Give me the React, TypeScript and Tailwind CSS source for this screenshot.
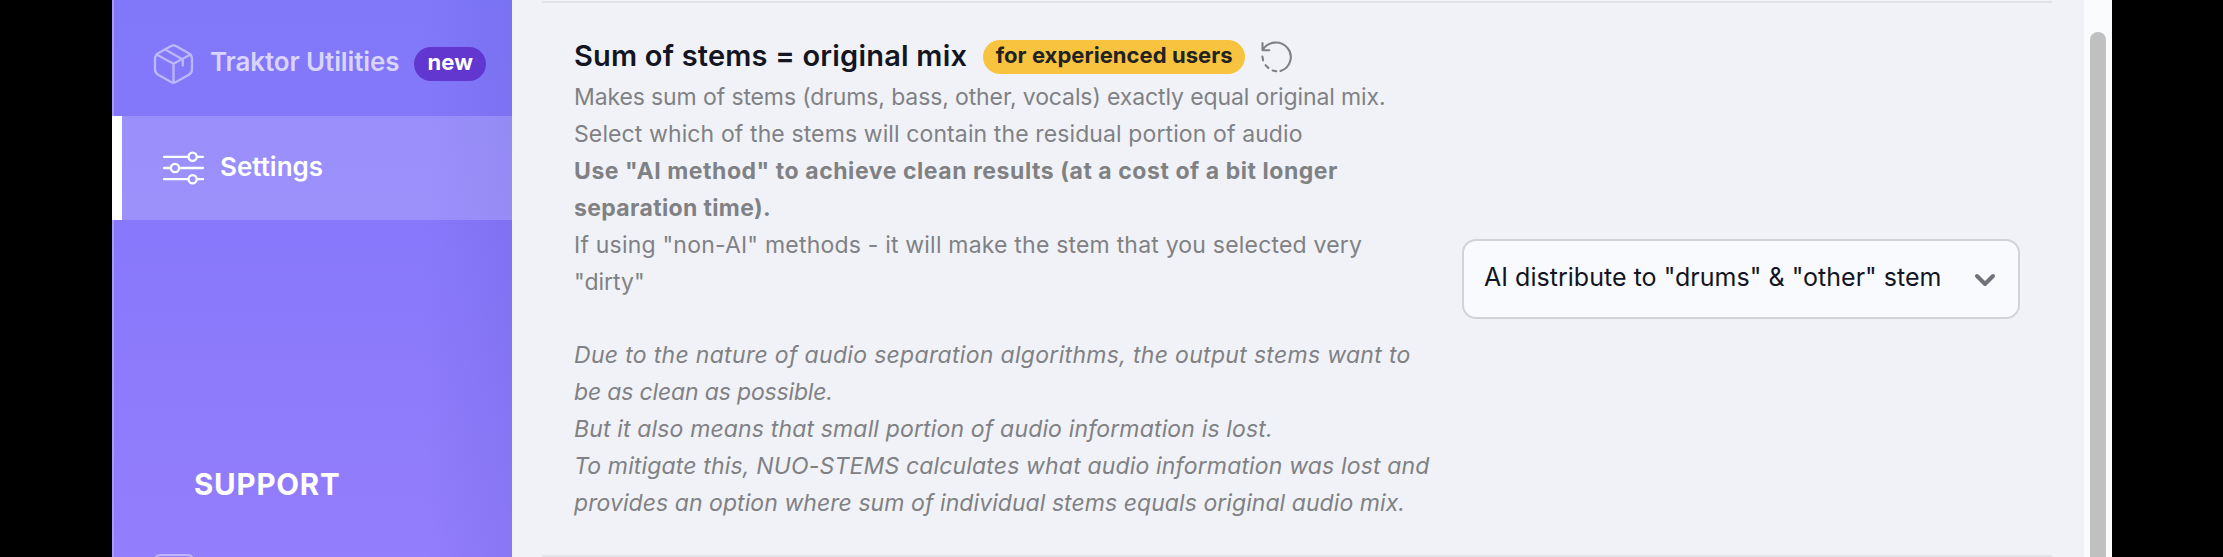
import React from "react";

function BoxIcon() {
  return (
    <svg className="h-[42px] w-[42px] shrink-0" viewBox="0 0 42 42" fill="none" stroke="#bdb7fc" strokeWidth="2.3" strokeLinejoin="round" strokeLinecap="round">
      <path d="M17.6 3.2Q20.5 1.5 23.4 3.2L35.4 9.9Q39 12 39 15.6V26.4Q39 30 35.4 32.1L23.4 38.8Q20.5 40.5 17.6 38.8L5.6 32.1Q2 30 2 26.4V15.6Q2 12 5.6 9.9Z" />
      <path d="M3.5 11.5L20.5 20.8L37.5 11.5M20.5 20.8V39.5" />
      <path d="M12.2 6.6L29.8 16.4V22.5" />
    </svg>
  );
}

function SlidersIcon() {
  return (
    <svg className="h-[34px] w-[42px] shrink-0" viewBox="0 0 42 34" fill="none" stroke="#ffffff" strokeWidth="2.3" strokeLinecap="round">
      <path d="M1 5.8H25.2M34 5.8H40M1 17H7.6M16.4 17H40M1 28.2H25.2M34 28.2H40" />
      <circle cx="29.6" cy="5.8" r="4.1" />
      <circle cx="12" cy="17" r="4.1" />
      <circle cx="29.6" cy="28.2" r="4.1" />
    </svg>
  );
}

function ResetIcon() {
  return (
    <svg className="h-[34px] w-[34px] shrink-0" viewBox="0 0 34 34" fill="none" stroke="#808184" strokeWidth="2.1" strokeLinecap="round" strokeLinejoin="round">
      <path d="M2.5 3V10.2H9.3M2.8 9.8A15 14.6 0 1 1 20.5 31" />
      <path d="M2.4 16.5L3.1 20.4M5.6 25.2L8.4 28M12.6 30.5L16.3 31.3" />
    </svg>
  );
}

export default function App() {
  return (
    <div className="flex h-[557px] w-[2223px] overflow-hidden bg-black pl-[112px] pr-[111px] font-['Inter',sans-serif]">
      <aside className="flex w-[400px] shrink-0 flex-col bg-[linear-gradient(90deg,transparent_78%,rgba(70,70,190,0.13)_100%),linear-gradient(180deg,#8078f9_0%,#8878fb_40%,#937efc_100%)]">
        <div className="flex h-[116px] shrink-0 items-start border-l-2 border-[#a69bfb] pl-[39px] pt-[43px]">
          <BoxIcon />
          <span className="ml-[15px] whitespace-nowrap text-[26px] font-semibold leading-[38px] tracking-[-0.13px] text-[#d9d5fe]">Traktor Utilities</span>
          <span className="ml-[15px] mt-1 flex h-[34px] w-[72px] shrink-0 items-center justify-center rounded-full bg-[#6137cf] pb-[3px] text-[22px] font-bold tracking-[0.2px] text-white">new</span>
        </div>
        <div className="flex h-[104px] shrink-0 items-center border-l-[10px] border-white bg-white/18 pl-[41px]">
          <SlidersIcon />
          <span className="ml-[15px] pb-[3px] text-[26px] font-semibold leading-[40px] text-white">Settings</span>
        </div>
        <div className="flex h-[337px] shrink-0 flex-col border-l-2 border-[#a69bfb]">
          <h2 className="pl-[80px] pt-[244px] text-[29.5px] font-bold leading-[40px] tracking-[0.8px] text-white">SUPPORT</h2>
          <div className="ml-[40px] mt-[50px] h-[20px] w-[40px] shrink-0 rounded-md border-2 border-[#bfb5fd]" />
        </div>
      </aside>

      <main className="flex w-[1572px] shrink-0 flex-col bg-[#f1f2f7] pl-[30px] pr-[32px]">
        <div className="mt-px h-[2px] shrink-0 bg-[#e3e4e8]" />
        <section className="flex h-[552px] shrink-0 justify-between pl-[32px]">
          <div className="w-[870px] pt-[34px]">
            <div className="flex h-[42px] items-start whitespace-nowrap">
              <h1 className="text-[29px] font-semibold leading-[38px] tracking-[0.2px] text-[#141522]">Sum of stems = original mix</h1>
              <span className="ml-4 mt-[3px] flex h-[34px] w-[262px] items-center justify-center rounded-full bg-[#f8c440] pb-[3px] text-[22px] font-bold tracking-[0.05px] text-[#222222]">for experienced users</span>
              <span className="ml-[15px] mt-[3px]"><ResetIcon /></span>
            </div>
            <div className="mb-9 whitespace-nowrap text-[23px] leading-[37px] text-[#808184]">
              <p className="tracking-[-0.12px]">Makes sum of stems (drums, bass, other, vocals) exactly equal original mix.</p>
              <p className="tracking-[0.11px]">Select which of the stems will contain the residual portion of audio</p>
              <p className="font-bold tracking-[0.55px]">Use "AI method" to achieve clean results (at a cost of a bit longer</p>
              <p className="font-bold tracking-[0.35px]">separation time).</p>
              <p className="tracking-[0.2px]">If using "non-AI" methods - it will make the stem that you selected very</p>
              <p>"dirty"</p>
            </div>
            <div className="whitespace-nowrap text-[23px] italic leading-[37px] text-[#808184]">
              <p className="tracking-[0.31px]">Due to the nature of audio separation algorithms, the output stems want to</p>
              <p className="tracking-[-0.16px]">be as clean as possible.</p>
              <p className="tracking-[0.15px]">But it also means that small portion of audio information is lost.</p>
              <p className="tracking-[0.16px]">To mitigate this, NUO-STEMS calculates what audio information was lost and</p>
              <p className="tracking-[0.06px]">provides an option where sum of individual stems equals original audio mix.</p>
            </div>
          </div>
          <button className="mr-[32px] mt-[236px] flex h-[80px] w-[558px] items-center justify-between whitespace-nowrap rounded-[14px] border-2 border-[#d2d3d8] bg-[#f9fafe] pb-[2px] pl-[20px] pr-[22px] text-[25px] tracking-[0.03px] text-[#141522]">
            AI distribute to "drums" &amp; "other" stem
            <svg className="mt-[3px] h-[14px] w-[22px]" viewBox="0 0 22 14" fill="none" stroke="#71727c" strokeWidth="4" strokeLinecap="round" strokeLinejoin="round"><path d="M3 3L11 11L19 3" /></svg>
          </button>
        </section>
        <div className="h-[2px] shrink-0 bg-[#e3e4e8]" />
      </main>
      <div className="flex w-[28px] shrink-0 bg-[#fafbfd] pl-[6px] pt-8">
        <div className="h-[600px] w-4 rounded-full bg-[#c0c0c0]" />
      </div>
    </div>
  );
}
